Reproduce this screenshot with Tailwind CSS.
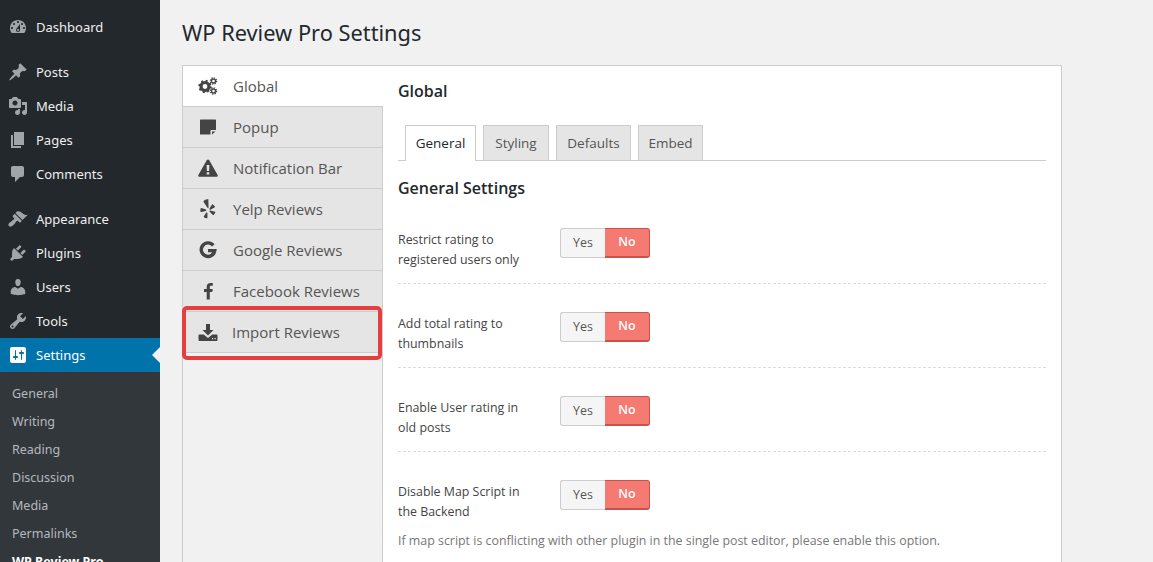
<!DOCTYPE html>
<html lang="en">
<head>
  <meta charset="UTF-8">
  <title>WP Review Pro Settings</title>
  <script src="https://cdn.jsdelivr.net/npm/@tailwindcss/browser@4"></script>
</head>
<body class="bg-[#f1f1f1] h-[562px] overflow-hidden flex font-['Open_Sans',sans-serif]">
  <!-- admin sidebar -->
  <aside class="w-[160px] h-[562px] shrink-0 bg-[#23282d] overflow-hidden font-['Noto_Sans',sans-serif] text-[13px] text-[#eee] pt-[10px]">
    <a class="flex items-center h-[34px] pl-[36px] pt-[2px] relative"><svg class="absolute left-[8px] top-[7px] w-[20px] h-[20px] fill-[#a0a5aa]" viewBox="0 0 20 20"><path d="M3.76 16h12.48c1.1-1.37 1.76-3.11 1.76-5 0-4.42-3.58-8-8-8s-8 3.58-8 8c0 1.89.66 3.63 1.76 5zM10 4c.55 0 1 .45 1 1s-.45 1-1 1-1-.45-1-1 .45-1 1-1zM6 6c.55 0 1 .45 1 1s-.45 1-1 1-1-.45-1-1 .45-1 1-1zm8 0c.55 0 1 .45 1 1s-.45 1-1 1-1-.45-1-1 .45-1 1-1zm-5.37 5.55L12 7v6c0 1.1-.9 2-2 2s-2-.9-2-2c0-.57.24-1.08.63-1.45zM4 10c.55 0 1 .45 1 1s-.45 1-1 1-1-.45-1-1 .45-1 1-1zm12 0c.55 0 1 .45 1 1s-.45 1-1 1-1-.45-1-1 .45-1 1-1zm-5 3c0-.55-.45-1-1-1s-1 .45-1 1 .45 1 1 1 1-.45 1-1z"/></svg>Dashboard</a>
    <div class="h-[11px]"></div>
    <a class="flex items-center h-[34px] pl-[36px] pt-[2px] relative"><svg class="absolute left-[8px] top-[7px] w-[20px] h-[20px] fill-[#a0a5aa]" viewBox="0 0 20 20"><path d="M10.44 3.02l1.82-1.82 6.36 6.35-1.83 1.82c-1.05-.68-2.48-.57-3.41.36l-.75.75c-.92.93-1.04 2.35-.35 3.41l-1.83 1.82-2.41-2.41-2.8 2.79c-.42.42-3.38 2.71-3.8 2.29s1.86-3.39 2.28-3.81l2.79-2.79L4.1 9.36l1.83-1.82c1.05.69 2.48.57 3.4-.36l.75-.75c.93-.92 1.05-2.35.36-3.41z"/></svg>Posts</a>
    <a class="flex items-center h-[34px] pl-[36px] pt-[2px] relative"><svg class="absolute left-[8px] top-[7px] w-[20px] h-[20px] fill-[#a0a5aa]" viewBox="0 0 20 20"><path d="M13 11V4c0-.55-.45-1-1-1h-1.67L9 1H5L3.67 3H2c-.55 0-1 .45-1 1v7c0 .55.45 1 1 1h10c.55 0 1-.45 1-1zM7 4.5c1.38 0 2.5 1.12 2.5 2.5S8.38 9.5 7 9.5 4.5 8.38 4.5 7 5.62 4.5 7 4.5zM14 6h5v10.5c0 1.38-1.12 2.5-2.5 2.5S14 17.88 14 16.5s1.12-2.5 2.5-2.5c.17 0 .34.02.5.05V9h-3V6zm-4 8.05V13h2v3.5c0 1.38-1.12 2.5-2.5 2.5S7 17.88 7 16.5 8.12 14 9.5 14c.17 0 .34.02.5.05z"/></svg>Media</a>
    <a class="flex items-center h-[34px] pl-[36px] pt-[2px] relative"><svg class="absolute left-[8px] top-[7px] w-[20px] h-[20px] fill-[#a0a5aa]" viewBox="0 0 20 20"><path d="M6 15V2h10v13H6zm-1 1h8v2H3V5h2v11z"/></svg>Pages</a>
    <a class="flex items-center h-[34px] pl-[36px] pt-[2px] relative"><svg class="absolute left-[8px] top-[7px] w-[20px] h-[20px] fill-[#a0a5aa]" viewBox="0 0 20 20"><path d="M5 2h9c1.1 0 2 .9 2 2v7c0 1.1-.9 2-2 2h-2l-5 5v-5H5c-1.1 0-2-.9-2-2V4c0-1.1.9-2 2-2z"/></svg>Comments</a>
    <div class="h-[11px]"></div>
    <a class="flex items-center h-[34px] pl-[36px] pt-[2px] relative"><svg class="absolute left-[8px] top-[7px] w-[20px] h-[20px] fill-[#a0a5aa]" viewBox="0 0 20 20"><path d="M14.48 11.06L7.41 3.99l1.5-1.5c.5-.56 2.3-.47 3.51.32 1.21.8 1.43 1.28 2.91 2.1 1.18.64 2.45 1.26 4.45.85zm-.71.71L6.7 4.7 4.93 6.47c-.39.39-.39 1.02 0 1.41l1.06 1.06c.39.39.39 1.03 0 1.42-.6.6-1.43 1.11-2.21 1.69-.35.26-.7.53-1.01.84C1.43 13.23.4 14.84.4 15.8c0 .95.95 1.9 1.9 1.9.96 0 2.58-1.03 3.9-2.36.31-.31.58-.66.85-1.02.57-.78 1.08-1.61 1.69-2.21.39-.39 1.02-.39 1.41 0l1.06 1.06c.39.39 1.02.39 1.41 0z"/></svg>Appearance</a>
    <a class="flex items-center h-[34px] pl-[36px] pt-[2px] relative"><svg class="absolute left-[8px] top-[7px] w-[20px] h-[20px] fill-[#a0a5aa]" viewBox="0 0 20 20"><path d="M13.11 4.36L9.87 7.6 8 5.73l3.24-3.24c.35-.34 1.05-.2 1.56.32.52.51.66 1.21.31 1.55zm-8 1.77l.91-1.12 9.01 9.01-1.19.84c-.71.71-2.63 1.16-3.82 1.16H6.14L4.9 17.26c-.59.59-1.54.59-2.12 0-.59-.58-.59-1.53 0-2.12l1.24-1.24v-3.88c0-1.13.4-3.19 1.09-3.89zm7.26 3.97l3.24-3.24c.34-.35 1.04-.21 1.55.31.52.51.66 1.21.31 1.55l-3.24 3.25z"/></svg>Plugins</a>
    <a class="flex items-center h-[34px] pl-[36px] pt-[2px] relative"><svg class="absolute left-[8px] top-[7px] w-[20px] h-[20px] fill-[#a0a5aa]" viewBox="0 0 20 20"><path d="M10 9.25c-2.27 0-2.73-3.44-2.73-3.44C7 4.02 7.82 2 9.97 2c2.16 0 2.98 2.02 2.71 3.81 0 0-.41 3.44-2.68 3.44zm0 2.57L12.72 10c2.39 0 4.52 2.33 4.52 4.53v2.49s-3.65 1.13-7.24 1.13c-3.65 0-7.24-1.13-7.24-1.13v-2.49c0-2.25 1.94-4.48 4.47-4.48z"/></svg>Users</a>
    <a class="flex items-center h-[34px] pl-[36px] pt-[2px] relative"><svg class="absolute left-[8px] top-[7px] w-[20px] h-[20px] fill-[#a0a5aa]" viewBox="0 0 20 20"><path d="M16.68 9.77c-1.34 1.34-3.3 1.67-4.95.99l-5.41 6.52c-.99.99-2.59.99-3.58 0s-.99-2.59 0-3.57l6.52-5.42c-.68-1.65-.35-3.61.99-4.95 1.28-1.28 3.12-1.62 4.72-1.06l-2.89 2.89 2.82 2.82 2.86-2.87c.53 1.58.18 3.39-1.08 4.65zM3.81 16.21c.4.39 1.04.39 1.43 0 .4-.4.4-1.04 0-1.43-.39-.4-1.03-.4-1.43 0-.39.39-.39 1.03 0 1.43z"/></svg>Tools</a>
    <a class="flex items-center h-[34px] pl-[36px] pt-[2px] relative bg-[#0073aa] text-white"><svg class="absolute left-[8px] top-[7px] w-[20px] h-[20px] fill-white" viewBox="0 0 20 20"><path d="M18 16V4c0-1.1-.9-2-2-2H4c-1.1 0-2 .9-2 2v12c0 1.1.9 2 2 2h12c1.1 0 2-.9 2-2zM8 11h1c.55 0 1 .45 1 1s-.45 1-1 1H8v1.5c0 .28-.22.5-.5.5s-.5-.22-.5-.5V13H6c-.55 0-1-.45-1-1s.45-1 1-1h1V5.5c0-.28.22-.5.5-.5s.5.22.5.5V11zm5-2h-1c-.55 0-1-.45-1-1s.45-1 1-1h1V5.5c0-.28.22-.5.5-.5s.5.22.5.5V7h1c.55 0 1 .45 1 1s-.45 1-1 1h-1v5.5c0 .28-.22.5-.5.5s-.5-.22-.5-.5V9z"/></svg>Settings<span class="absolute right-0 top-[9px] border-y-[8px] border-y-transparent border-r-[8px] border-r-[#f1f1f1]"></span></a>
    <div class="bg-[#32373c] pt-[7px] text-[12.5px] text-[#b4b9be]">
      <a class="flex items-center h-[28px] pl-[12px] pt-[2px]">General</a>
      <a class="flex items-center h-[28px] pl-[12px] pt-[2px]">Writing</a>
      <a class="flex items-center h-[28px] pl-[12px] pt-[2px]">Reading</a>
      <a class="flex items-center h-[28px] pl-[12px] pt-[2px]">Discussion</a>
      <a class="flex items-center h-[28px] pl-[12px] pt-[2px]">Media</a>
      <a class="flex items-center h-[28px] pl-[12px] pt-[2px]">Permalinks</a>
      <a class="flex items-center h-[28px] pl-[12px] pt-[2px] font-bold text-white">WP Review Pro</a>
    </div>
  </aside>

  <main class="flex-1 pl-[22px] relative">
    <h1 class="h-[65px] pt-[17px] text-[21.8px] leading-[32px] text-[#23282d] font-['Noto_Sans',sans-serif]">WP Review Pro Settings</h1>
    <div class="w-[880px] h-[600px] flex border border-[#ccc] bg-white">
      <!-- plugin nav -->
      <nav class="w-[200px] shrink-0 bg-[#f1f1f1] border-r border-[#ccc] text-[15px] text-[#555]">
        <a class="flex items-center h-[41px] -mr-px relative bg-white border-b border-[#ccc]">
          <svg class="w-[20px] h-[18px] ml-[15px] mr-[15px] fill-none stroke-[#444]" viewBox="0 0 20 18"><circle cx="7" cy="9.5" r="4" stroke-width="3.2"/><circle cx="7" cy="9.5" r="5.8" stroke-width="1.8" stroke-dasharray="2 2.55"/><circle cx="15.5" cy="4" r="2" stroke-width="1.4"/><circle cx="15.5" cy="4" r="3.2" stroke-width="1.2" stroke-dasharray="1.3 1.2"/><circle cx="15.5" cy="14" r="2" stroke-width="1.4"/><circle cx="15.5" cy="14" r="3.2" stroke-width="1.2" stroke-dasharray="1.3 1.2"/></svg>Global</a>
        <a class="flex items-center h-[41px] bg-[#e5e5e5] border-b border-[#ccc]">
          <svg class="w-[20px] h-[18px] ml-[15px] mr-[15px] fill-[#444]" viewBox="0 0 20 18"><path d="M2.5 1.5h15a.5.5 0 0 1 .5.5v10h-4.500a1 1 0 0 0-1 1V16.500H2.500a.5.5 0 0 1-.5-.5V2a.5.5 0 0 1 .5-.5z"/><path d="M14 13.500h3.500l-3.500 3z"/></svg>Popup</a>
        <a class="flex items-center h-[41px] bg-[#e5e5e5] border-b border-[#ccc]">
          <svg class="w-[20px] h-[18px] ml-[15px] mr-[15px] fill-[#444]" viewBox="0 0 20 18"><path fill-rule="evenodd" d="M10 0.500c.6 0 1 .3 1.300.8l8.300 14.700c.5.900-.1 1.800-1.100 1.800H1.500c-1 0-1.600-.9-1.100-1.800L8.700 1.300c.3-.5.700-.8 1.300-.8zM8.600 6l.3 6h2.200l.3-6zM8.700 13.200v2.300h2.600v-2.300z"/></svg>Notification Bar</a>
        <a class="flex items-center h-[41px] bg-[#e5e5e5] border-b border-[#ccc]">
          <svg class="w-[20px] h-[20px] ml-[15px] mr-[15px] fill-[#444]" viewBox="1 0 18 18"><path d="M7.500 0.600l2.800-.6.200 7.600c0 .6-.7.800-1 .3L5.900 2.400c-.2-.4.900-1.400 1.600-1.800z"/><path d="M4.100 8.200l4 1.300c.6.200.6 1-.1 1.200l-4 1c-.4.100-.7-.1-.8-.5-.2-.8-.1-1.800.2-2.600.1-.3.400-.5.700-.4z"/><path d="M8.300 12.300c.4-.5 1.200-.2 1.200.4v4.100c0 .4-.3.700-.7.600-.8-.1-1.800-.5-2.400-1-.3-.2-.3-.6-.1-.9z"/><path d="M11.500 11.500c-.4-.5 0-1.200.7-1.100l4 1c.4.100.6.500.4.800-.3.800-.9 1.600-1.500 2.100-.3.200-.7.200-.9-.1z"/><path d="M12.100 9.600c-.6.200-1.100-.5-.8-1l2.200-3.500c.2-.3.600-.4.900-.2.700.4 1.400 1.200 1.800 1.900.2.300 0 .7-.3.800z"/></svg>Yelp Reviews</a>
        <a class="flex items-center h-[41px] bg-[#e5e5e5] border-b border-[#ccc]">
          <svg class="w-[20px] h-[18px] ml-[15px] mr-[15px] fill-none stroke-[#444]" viewBox="0 0 20 18" stroke-width="3.4"><path d="M15.300 4.300A6.800 6.800 0 1 0 16.800 9.600H10"/></svg>Google Reviews</a>
        <a class="flex items-center h-[41px] bg-[#e5e5e5] border-b border-[#ccc]">
          <svg class="w-[20px] h-[18px] ml-[15px] mr-[15px] fill-[#444]" viewBox="0 0 20 18"><path d="M11.800 17.500V10h2.500l.4-3h-2.900V5.200c0-.9.300-1.400 1.400-1.400h1.600V1.100c-.3 0-1.200-.1-2.300-.1-2.300 0-3.800 1.300-3.800 3.900V7H6v3h2.700v7.500z"/></svg>Facebook Reviews</a>
        <a class="flex items-center h-[41px] bg-[#e5e5e5] border-b border-[#ccc]">
          <svg class="w-[20px] h-[18px] ml-[15px] mr-[14px] fill-[#444]" viewBox="0 0 20 18"><path d="M8 1h4v6h3.500L10 12.500 4.500 7H8z"/><path fill-rule="evenodd" d="M1.500 11.500h4.200L10 15l4.300-3.500h4.200c.5 0 1 .4 1 1V17c0 .5-.5 1-1 1h-17c-.5 0-1-.5-1-1v-4.500c0-.6.500-1 1-1zM14 15v1.200h1.200V15zm2.500 0v1.200h1.200V15z"/></svg>Import Reviews</a>
      </nav>

      <!-- settings panel -->
      <section class="flex-1 pl-[15px] pr-[15px] pt-[14px] text-[12.4px] text-[#444]">
        <h2 class="text-[16px] leading-[22px] font-semibold text-[#23282d]">Global</h2>
        <div class="flex gap-[7px] mt-[23px] pl-[7px] border-b border-[#ccc] h-[36px] text-[13.5px] font-medium text-[#555]">
          <a class="w-[71px] h-[36px] flex items-center justify-center bg-white border border-b-0 border-[#ccc] text-[#23282d]">General</a>
          <a class="w-[66px] h-[35px] flex items-center justify-center bg-[#e5e5e5] border border-b-0 border-[#ccc]">Styling</a>
          <a class="w-[75px] h-[35px] flex items-center justify-center bg-[#e5e5e5] border border-b-0 border-[#ccc]">Defaults</a>
          <a class="w-[65px] h-[35px] flex items-center justify-center bg-[#e5e5e5] border border-b-0 border-[#ccc]">Embed</a>
        </div>
        <h3 class="text-[16px] leading-[22px] font-semibold text-[#23282d] mt-[16px] mb-[29px]">General Settings</h3>

        <div class="flex border-b border-dashed border-[#ddd] h-[56px]">
          <p class="w-[162px] leading-[20px] mt-[2px]">Restrict rating to<br>registered users only</p>
          <div class="flex h-[30px]"><span class="w-[45px] flex items-center justify-center bg-[#f5f5f5] border border-[#ccc] border-r-0 rounded-l-[3px] text-[#555]">Yes</span><span class="w-[45px] flex items-center justify-center bg-[#f47a72] border border-[#c9534c] border-l-0 border-b-2 rounded-r-[3px] font-semibold text-white">No</span></div>
        </div>
        <div class="flex border-b border-dashed border-[#ddd] h-[84px] pt-[28px]">
          <p class="w-[162px] leading-[20px] mt-[2px]">Add total rating to<br>thumbnails</p>
          <div class="flex h-[30px]"><span class="w-[45px] flex items-center justify-center bg-[#f5f5f5] border border-[#ccc] border-r-0 rounded-l-[3px] text-[#555]">Yes</span><span class="w-[45px] flex items-center justify-center bg-[#f47a72] border border-[#c9534c] border-l-0 border-b-2 rounded-r-[3px] font-semibold text-white">No</span></div>
        </div>
        <div class="flex border-b border-dashed border-[#ddd] h-[84px] pt-[28px]">
          <p class="w-[162px] leading-[20px] mt-[2px]">Enable User rating in<br>old posts</p>
          <div class="flex h-[30px]"><span class="w-[45px] flex items-center justify-center bg-[#f5f5f5] border border-[#ccc] border-r-0 rounded-l-[3px] text-[#555]">Yes</span><span class="w-[45px] flex items-center justify-center bg-[#f47a72] border border-[#c9534c] border-l-0 border-b-2 rounded-r-[3px] font-semibold text-white">No</span></div>
        </div>
        <div class="flex pt-[28px]">
          <p class="w-[162px] leading-[20px] mt-[2px]">Disable Map Script in<br>the Backend</p>
          <div class="flex h-[30px]"><span class="w-[45px] flex items-center justify-center bg-[#f5f5f5] border border-[#ccc] border-r-0 rounded-l-[3px] text-[#555]">Yes</span><span class="w-[45px] flex items-center justify-center bg-[#f47a72] border border-[#c9534c] border-l-0 border-b-2 rounded-r-[3px] font-semibold text-white">No</span></div>
        </div>
        <p class="mt-[9px] leading-[20px] text-[#777]">If map script is conflicting with other plugin in the single post editor, please enable this option.</p>
      </section>
    </div>
    <!-- highlight box -->
    <div class="absolute left-[22px] top-[306px] w-[200px] h-[54px] border-[4px] border-[#e53e3e] rounded-[5px]"></div>
  </main>
</body>
</html>
